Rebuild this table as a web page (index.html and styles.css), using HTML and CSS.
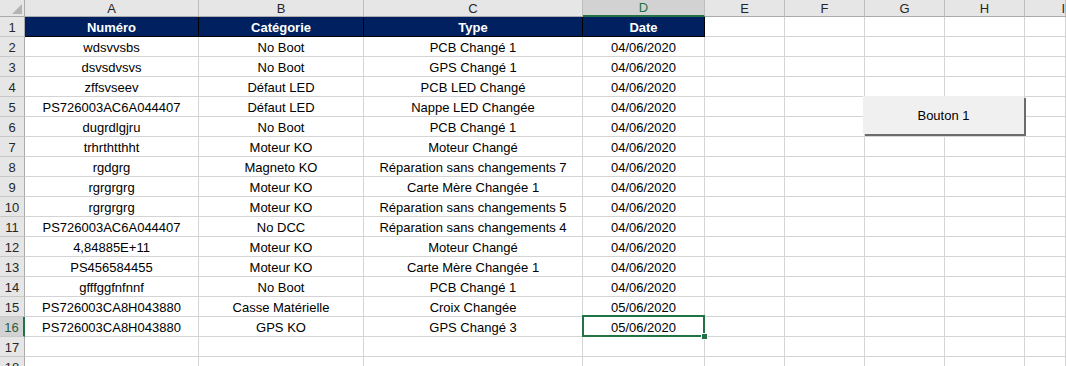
FILE: index.html
```html
<!DOCTYPE html>
<html lang="fr">
<head>
<meta charset="utf-8">
<title>Feuille</title>
<link rel="stylesheet" href="styles.css">
</head>
<body>
<div class="sheet">
  <div class="row hdr">
    <div class="corner"><svg class="tri" width="10" height="10" viewBox="0 0 10 10"><polygon points="10,0 10,10 0,10" fill="#b4b4b4"/></svg></div>
    <div class="ch">A</div><div class="ch">B</div><div class="ch">C</div><div class="ch ch-sel">D</div><div class="ch">E</div><div class="ch">F</div><div class="ch">G</div><div class="ch">H</div><div class="ch ch-cut">I</div>
  </div>
  <div class="row">
    <div class="rh">1</div><div class="c th">Numéro</div><div class="c th">Catégorie</div><div class="c th">Type</div><div class="c th">Date</div><div class="c"></div><div class="c"></div><div class="c"></div><div class="c"></div><div class="c"></div>
  </div>
  <div class="row">
    <div class="rh">2</div><div class="c">wdsvvsbs</div><div class="c">No Boot</div><div class="c">PCB Changé 1</div><div class="c">04/06/2020</div><div class="c"></div><div class="c"></div><div class="c"></div><div class="c"></div><div class="c"></div>
  </div>
  <div class="row">
    <div class="rh">3</div><div class="c">dsvsdvsvs</div><div class="c">No Boot</div><div class="c">GPS Changé 1</div><div class="c">04/06/2020</div><div class="c"></div><div class="c"></div><div class="c"></div><div class="c"></div><div class="c"></div>
  </div>
  <div class="row">
    <div class="rh">4</div><div class="c">zffsvseev</div><div class="c">Défaut LED</div><div class="c">PCB LED Changé</div><div class="c">04/06/2020</div><div class="c"></div><div class="c"></div><div class="c"></div><div class="c"></div><div class="c"></div>
  </div>
  <div class="row">
    <div class="rh">5</div><div class="c">PS726003AC6A044407</div><div class="c">Défaut LED</div><div class="c">Nappe LED Changée</div><div class="c">04/06/2020</div><div class="c"></div><div class="c"></div><div class="c"></div><div class="c"></div><div class="c"></div>
  </div>
  <div class="row">
    <div class="rh">6</div><div class="c">dugrdlgjru</div><div class="c">No Boot</div><div class="c">PCB Changé 1</div><div class="c">04/06/2020</div><div class="c"></div><div class="c"></div><div class="c"></div><div class="c"></div><div class="c"></div>
  </div>
  <div class="row">
    <div class="rh">7</div><div class="c">trhrthtthht</div><div class="c">Moteur KO</div><div class="c">Moteur Changé</div><div class="c">04/06/2020</div><div class="c"></div><div class="c"></div><div class="c"></div><div class="c"></div><div class="c"></div>
  </div>
  <div class="row">
    <div class="rh">8</div><div class="c">rgdgrg</div><div class="c">Magneto KO</div><div class="c">Réparation sans changements 7</div><div class="c">04/06/2020</div><div class="c"></div><div class="c"></div><div class="c"></div><div class="c"></div><div class="c"></div>
  </div>
  <div class="row">
    <div class="rh">9</div><div class="c">rgrgrgrg</div><div class="c">Moteur KO</div><div class="c">Carte Mère Changée 1</div><div class="c">04/06/2020</div><div class="c"></div><div class="c"></div><div class="c"></div><div class="c"></div><div class="c"></div>
  </div>
  <div class="row">
    <div class="rh">10</div><div class="c">rgrgrgrg</div><div class="c">Moteur KO</div><div class="c">Réparation sans changements 5</div><div class="c">04/06/2020</div><div class="c"></div><div class="c"></div><div class="c"></div><div class="c"></div><div class="c"></div>
  </div>
  <div class="row">
    <div class="rh">11</div><div class="c">PS726003AC6A044407</div><div class="c">No DCC</div><div class="c">Réparation sans changements 4</div><div class="c">04/06/2020</div><div class="c"></div><div class="c"></div><div class="c"></div><div class="c"></div><div class="c"></div>
  </div>
  <div class="row">
    <div class="rh">12</div><div class="c">4,84885E+11</div><div class="c">Moteur KO</div><div class="c">Moteur Changé</div><div class="c">04/06/2020</div><div class="c"></div><div class="c"></div><div class="c"></div><div class="c"></div><div class="c"></div>
  </div>
  <div class="row">
    <div class="rh">13</div><div class="c">PS456584455</div><div class="c">Moteur KO</div><div class="c">Carte Mère Changée 1</div><div class="c">04/06/2020</div><div class="c"></div><div class="c"></div><div class="c"></div><div class="c"></div><div class="c"></div>
  </div>
  <div class="row">
    <div class="rh">14</div><div class="c">gfffggfnfnnf</div><div class="c">No Boot</div><div class="c">PCB Changé 1</div><div class="c">04/06/2020</div><div class="c"></div><div class="c"></div><div class="c"></div><div class="c"></div><div class="c"></div>
  </div>
  <div class="row">
    <div class="rh">15</div><div class="c">PS726003CA8H043880</div><div class="c">Casse Matérielle</div><div class="c">Croix Changée</div><div class="c">05/06/2020</div><div class="c"></div><div class="c"></div><div class="c"></div><div class="c"></div><div class="c"></div>
  </div>
  <div class="row">
    <div class="rh rh-sel">16</div><div class="c">PS726003CA8H043880</div><div class="c">GPS KO</div><div class="c">GPS Changé 3</div><div class="c sel">05/06/2020</div><div class="c"></div><div class="c"></div><div class="c"></div><div class="c"></div><div class="c"></div>
  </div>
  <div class="row">
    <div class="rh">17</div><div class="c"></div><div class="c"></div><div class="c"></div><div class="c"></div><div class="c"></div><div class="c"></div><div class="c"></div><div class="c"></div><div class="c"></div>
  </div>
  <div class="row">
    <div class="rh">18</div><div class="c"></div><div class="c"></div><div class="c"></div><div class="c"></div><div class="c"></div><div class="c"></div><div class="c"></div><div class="c"></div><div class="c"></div>
  </div>
  <button class="btn" type="button">Bouton 1</button>
</div>
</body>
</html>
```

FILE: styles.css
```css
html, body {
  margin: 0;
  padding: 0;
  background: #ffffff;
  overflow: hidden;
}

.sheet {
  position: relative;
  width: 1066px;
  font-family: "Liberation Sans", Arial, sans-serif;
  font-size: 13px;
  color: #000000;
}

.row {
  display: grid;
  grid-template-columns: 25px 174px 165px 219px 122px 80px 80px 80px 80px 1fr;
  height: 20px;
}

.row.hdr {
  height: 17px;
}

.row > div {
  box-sizing: border-box;
  display: flex;
  align-items: center;
  justify-content: center;
  white-space: nowrap;
  overflow: hidden;
  border-right: 1px solid #d4d4d4;
  border-bottom: 1px solid #d4d4d4;
  padding-top: 1px;
}

.corner {
  position: relative;
  background: #e6e6e6;
  border-right: 1px solid #ababab !important;
  border-bottom: 1px solid #ababab !important;
}

.tri {
  position: absolute;
  right: 2px;
  bottom: 2px;
}

.ch {
  background: #e6e6e6;
  color: #262626;
  border-right: 1px solid #bdbdbd !important;
  border-bottom: 1px solid #ababab !important;
  padding-top: 0 !important;
}

.ch-sel {
  background: #d2d2d2;
  color: #217346;
  border-bottom: 2px solid #217346 !important;
}

.ch-cut {
  justify-content: flex-end !important;
  padding-right: 0;
}

.rh {
  background: #e6e6e6;
  color: #262626;
  border-right: 1px solid #ababab !important;
  border-bottom: 1px solid #c8c8c8 !important;
}

.rh-sel {
  background: #d2d2d2;
  color: #2b5c3f;
  border-right: 2px solid #217346 !important;
}

.th {
  background: #002060;
  color: #ffffff;
  font-weight: bold;
  border-right: 1px solid #000000 !important;
  border-bottom: 1px solid #000000 !important;
}

.sel {
  position: relative;
  overflow: visible !important;
}

.sel::after {
  content: "";
  position: absolute;
  top: -2px;
  left: -1px;
  right: -1px;
  bottom: -1px;
  border: 2px solid #217346;
  pointer-events: none;
}

.sel::before {
  content: "";
  position: absolute;
  right: -4px;
  bottom: -4px;
  width: 5px;
  height: 5px;
  background: #217346;
  border: 1px solid #ffffff;
  z-index: 2;
}

.btn {
  position: absolute;
  left: 863px;
  top: 96px;
  width: 161px;
  height: 38px;
  margin: 0;
  padding: 1px 0 0 0;
  border: none;
  background: #f0f0f0;
  box-shadow: 2px 2px 0 #6b6b6b;
  font-family: "Liberation Sans", Arial, sans-serif;
  font-size: 13px;
  color: #000000;
}
```
